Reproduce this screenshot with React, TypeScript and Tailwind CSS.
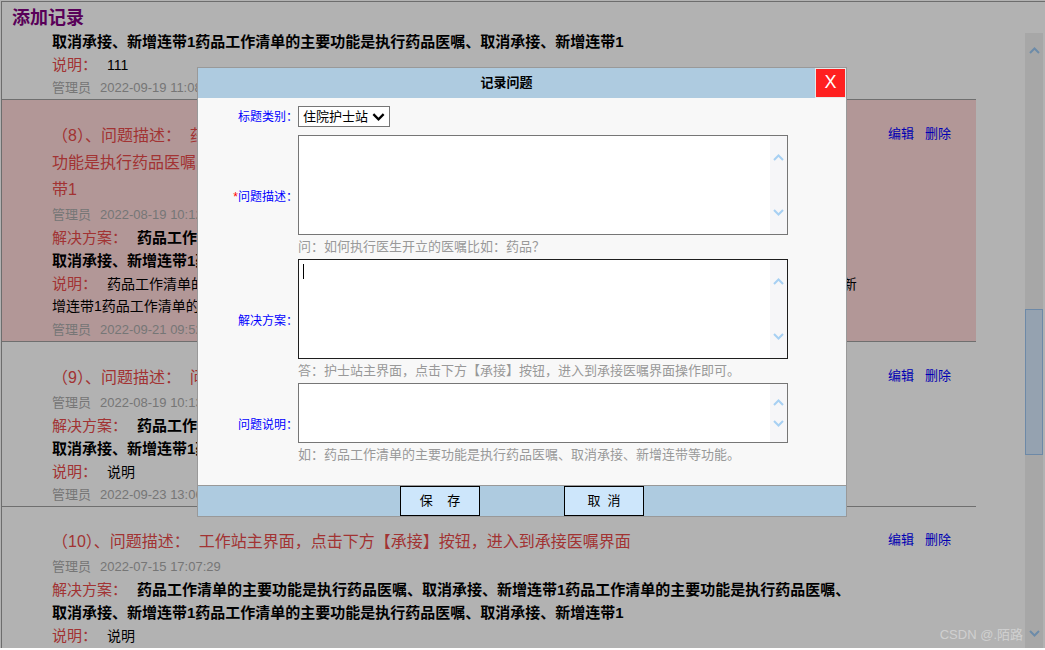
import React from 'react'

const RED = 'text-[#e84a4a]'

function Chevron({ up, className, w = 11, h = 7 }: { up?: boolean; className?: string; w?: number; h?: number }) {
  return (
    <svg width={w} height={h} viewBox="0 0 11 7" className={className}>
      <path d={up ? 'M1 6 L5.5 1.5 L10 6' : 'M1 1 L5.5 5.5 L10 1'} fill="none" stroke="currentColor" strokeWidth="2" />
    </svg>
  )
}

function Meta({ time }: { time: string }) {
  return (
    <div className="h-[23px] leading-[23px] text-[13px] text-[#aaaaaa] whitespace-nowrap">
      管理员<span className="ml-[9px]">{time}</span>
    </div>
  )
}

function Bold({ children }: { children: React.ReactNode }) {
  return <div className="h-[23px] leading-[23px] text-[15px] font-bold text-black whitespace-nowrap">{children}</div>
}

function Labeled({ label, children }: { label: string; children: React.ReactNode }) {
  return (
    <div className="h-[23px] leading-[23px] whitespace-nowrap">
      <span className={`text-[15px] ${RED}`}>{label}</span>
      <span className="ml-[10px]">{children}</span>
    </div>
  )
}

function Actions() {
  return (
    <div className="flex gap-[11px] pl-[18px] pt-[22px] h-fit leading-[23px] text-[13px] text-[#0000ff]">
      <span>编辑</span>
      <span>删除</span>
    </div>
  )
}

function Row({ pink, children }: { pink?: boolean; children: React.ReactNode }) {
  return (
    <div className={`flex border-b border-[#a0a0a0] ${pink ? 'bg-[#ffd9d9]' : ''}`}>
      <div className="w-[868px] pl-[50px] pt-[22px]">{children}</div>
      <Actions />
    </div>
  )
}

function Area({ className, pad, focus }: { className: string; pad: string; focus?: boolean }) {
  return (
    <div className={`relative flex w-[490px] border bg-white ${focus ? 'border-[#1e1e1e]' : 'border-[#767676]'} ${className}`}>
      <textarea className="flex-1 resize-none bg-transparent p-[3px] text-[13px] outline-none" />
      {focus && <div className="absolute left-[4px] top-[4px] w-px h-[15px] bg-black" />}
      <div className={`w-[17px] bg-[#f6f6f8] flex flex-col items-center justify-between text-[#a7d0f3] ${pad}`}>
        <Chevron up />
        <Chevron />
      </div>
    </div>
  )
}

function Field({ label, star, hint, children }: { label: string; star?: boolean; hint: string; children: React.ReactNode }) {
  return (
    <div className="flex items-center">
      <div className="w-[100px] text-right text-[12px] text-[#0000ff]">
        {star && <span className="text-[#ff0000]">*</span>}
        {label}
      </div>
      <div className="flex flex-col">
        {children}
        <div className="h-[24px] leading-[24px] text-[13px] text-[#999999]">{hint}</div>
      </div>
    </div>
  )
}

function Modal() {
  return (
    <div className="absolute left-[197px] top-[67px] w-[650px] h-[450px] border border-[#999999] bg-[#f8f8f8] flex flex-col">
      <div className="h-[30px] flex bg-[#aecbe0]">
        <div className="flex-1 text-center leading-[30px] text-[13px] font-bold text-black">记录问题</div>
        <div className="w-[31px] h-[30px] border border-[#e8e8e8] bg-[#ff2020] text-white text-[18px] leading-[27px] text-center">X</div>
      </div>
      <div className="flex-1 pt-[8px] flex flex-col">
        <div className="flex items-center h-[21px]">
          <div className="w-[100px] text-right text-[12px] text-[#0000ff]">标题类别：</div>
          <div className="w-[92px] h-[21px] border border-[#767676] bg-white flex items-center pl-[4px] text-[13px] text-black">
            住院护士站
            <Chevron className="ml-[4px] text-black" w={13} h={8} />
          </div>
        </div>
        <div className="mt-[8px]">
          <Field label="问题描述：" star hint="问：如何执行医生开立的医嘱比如：药品？">
            <Area className="h-[100px]" pad="py-[18px]" />
          </Field>
        </div>
        <Field label="解决方案：" hint="答：护士站主界面，点击下方【承接】按钮，进入到承接医嘱界面操作即可。">
          <Area className="h-[100px]" pad="py-[18px]" focus />
        </Field>
        <Field label="问题说明：" hint="如：药品工作清单的主要功能是执行药品医嘱、取消承接、新增连带等功能。">
          <Area className="h-[60px]" pad="py-[15px]" />
        </Field>
      </div>
      <div className="h-[31px] border-t border-[#999999] bg-[#aecbe0] flex justify-center gap-[84px]">
        <button className="w-[80px] h-[30px] border border-black bg-[#cde6fb] text-[13px] text-black">保&nbsp;&nbsp;&nbsp;&nbsp;存</button>
        <button className="w-[80px] h-[30px] border border-black bg-[#cde6fb] text-[13px] text-black">取&nbsp;&nbsp;消</button>
      </div>
    </div>
  )
}

export default function App() {
  const line1 = '药品工作清单的主要功能是执行药品医嘱、取消承接、新增连带1药品工作清单的主要功能是执行药品医嘱、'
  const line2 = '取消承接、新增连带1药品工作清单的主要功能是执行药品医嘱、取消承接、新增连带1'
  return (
    <div className="relative w-[1045px] h-[650px] overflow-hidden bg-white font-['Liberation_Sans','Noto_Sans_CJK_SC',sans-serif]">
      <div className="ml-px mt-px h-[647px] border-t border-l border-[#9d9d9d] flex flex-col">
        <div className="h-[28px] shrink-0 pl-[10px] pt-[3px] text-[18px] leading-[26px] font-bold text-[#800080]">添加记录</div>
        <div className="flex flex-1 min-h-0">
          <div className="w-[974px] overflow-hidden">
            {/* 上一条记录（已滚动） */}
            <div className="border-b border-[#a0a0a0] pl-[50px]">
              <Bold>{line2}</Bold>
              <Labeled label="说明：">
                <span className="text-[14px] text-black">111</span>
              </Labeled>
              <Meta time="2022-09-19 11:08:36" />
            </div>

            <Row pink>
              <div className={`text-[16px] leading-[27px] whitespace-nowrap ${RED}`}>
                （8）、问题描述：&nbsp;&nbsp;药品工作清单的主要功能是执行药品医嘱、取消承接、新增连带1药品工作清单的主要
                <br />
                功能是执行药品医嘱、取消承接、新增连带1药品工作清单的主要功能是执行药品医嘱、取消承接、新增连
                <br />
                带1
              </div>
              <Meta time="2022-08-19 10:12:45" />
              <Labeled label="解决方案：">
                <span className="text-[15px] font-bold text-black">{line1}</span>
              </Labeled>
              <Bold>{line2}</Bold>
              <Labeled label="说明：">
                <span className="text-[14px] text-black">
                  药品工作清单的主要功能是执行药品医嘱、取消承接、新增连带1药品工作清单的主要功能是执行药品医嘱、取消承接、新
                </span>
              </Labeled>
              <div className="h-[23px] leading-[23px] text-[14px] text-black whitespace-nowrap">
                增连带1药品工作清单的主要功能是执行药品医嘱、取消承接、新增连带1
              </div>
              <Meta time="2022-09-21 09:52:18" />
            </Row>

            <Row>
              <div className={`text-[16px] leading-[27px] whitespace-nowrap ${RED}`}>
                （9）、问题描述：&nbsp;&nbsp;问：如何执行医生开立的医嘱比如：药品？
              </div>
              <Meta time="2022-08-19 10:13:20" />
              <Labeled label="解决方案：">
                <span className="text-[15px] font-bold text-black">{line1}</span>
              </Labeled>
              <Bold>{line2}</Bold>
              <Labeled label="说明：">
                <span className="text-[14px] text-black">说明</span>
              </Labeled>
              <Meta time="2022-09-23 13:06:41" />
            </Row>

            <div className="flex">
              <div className="w-[868px] pl-[50px] pt-[21px]">
                <div className={`text-[16px] leading-[27px] whitespace-nowrap ${RED}`}>
                  （10）、问题描述：&nbsp;&nbsp;工作站主界面，点击下方【承接】按钮，进入到承接医嘱界面
                </div>
                <Meta time="2022-07-15 17:07:29" />
                <Labeled label="解决方案：">
                  <span className="text-[15px] font-bold text-black">{line1}</span>
                </Labeled>
                <Bold>{line2}</Bold>
                <Labeled label="说明：">
                  <span className="text-[14px] text-black">说明</span>
                </Labeled>
              </div>
              <div className="flex gap-[11px] pl-[18px] pt-[21px] h-fit leading-[23px] text-[13px] text-[#0000ff]">
                <span>编辑</span>
                <span>删除</span>
              </div>
            </div>
          </div>
          <div className="flex-1" />
          {/* 滚动条 */}
          <div className="w-[18px] mt-[3px] mr-[2px] bg-[#f0f0f0] flex flex-col text-[#9cc8f2]">
            <div className="h-[34px] flex items-center justify-center">
              <Chevron up />
            </div>
            <div className="h-[242px]" />
            <div className="h-[146px] border border-[#9cc5f0] bg-[#d6e8fc]" />
            <div className="flex-1" />
            <div className="h-[30px] flex items-center justify-center">
              <Chevron />
            </div>
          </div>
        </div>
      </div>

      {/* 遮罩 */}
      <div className="absolute left-0 top-0 w-full h-[648px] bg-black/30" />

      <Modal />

      <div className="absolute right-[22px] top-[625px] text-[13px] text-white/40">CSDN @.陌路</div>
    </div>
  )
}
